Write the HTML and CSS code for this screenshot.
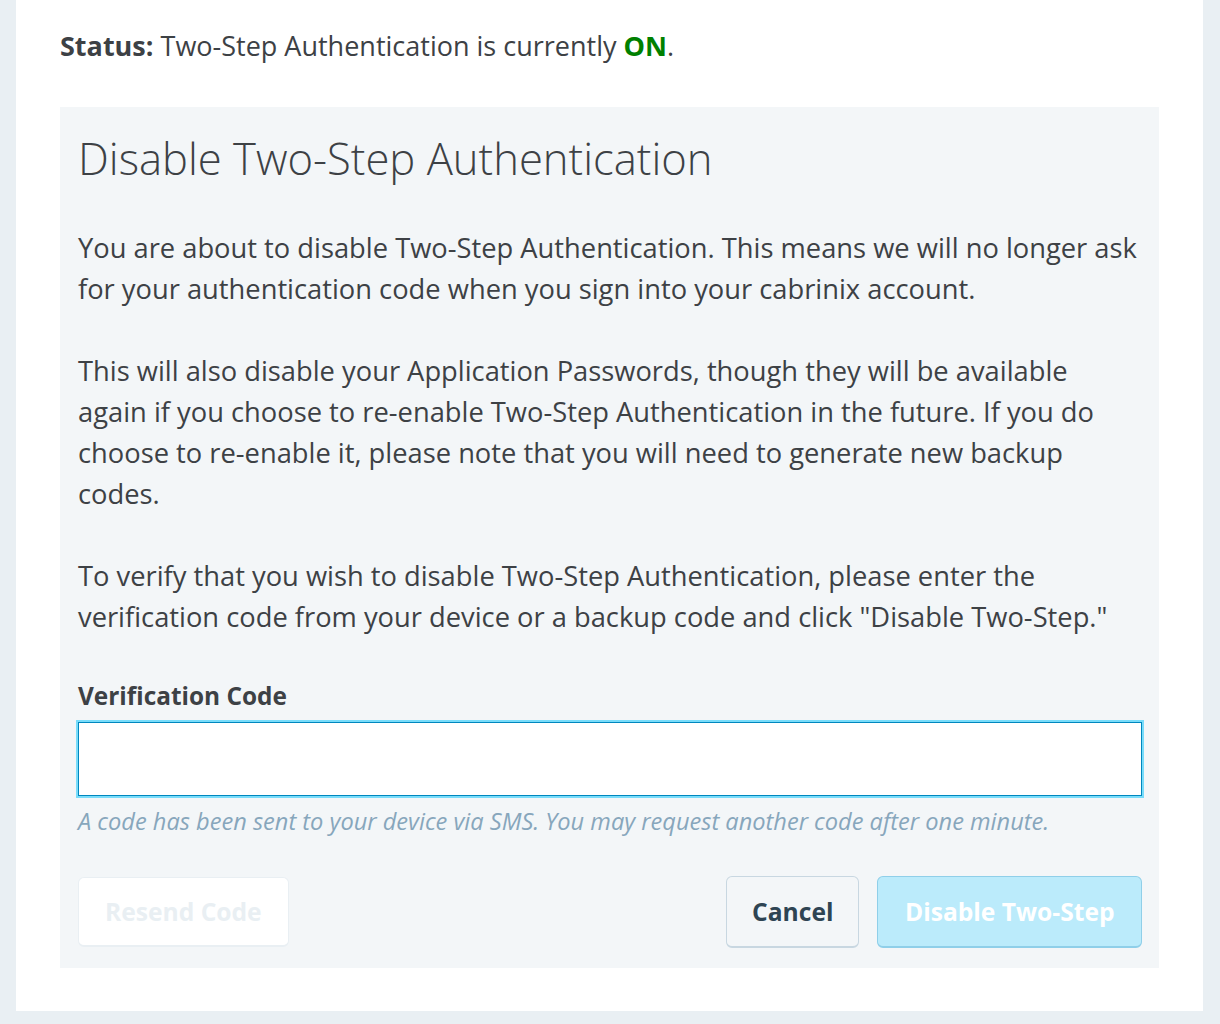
FILE: index.html
```html
<!DOCTYPE html>
<html lang="en">
<head>
<meta charset="utf-8">
<title>Disable Two-Step Authentication</title>
<link rel="stylesheet" href="styles.css">
</head>
<body>
<main class="card">
  <p class="status"><strong>Status:</strong> Two-Step Authentication is currently <span class="on">ON</span>.</p>
  <section class="panel">
    <h1 class="panel-title">Disable Two-Step Authentication</h1>
    <p class="para">You are about to disable Two-Step Authentication. This means we will no longer ask for your authentication code when you sign into your cabrinix account.</p>
    <p class="para">This will also disable your Application Passwords, though they will be available again if you choose to re-enable Two-Step Authentication in the future. If you do choose to re-enable it, please note that you will need to generate new backup codes.</p>
    <p class="para">To verify that you wish to disable Two-Step Authentication, please enter the verification code from your device or a backup code and click "Disable Two-Step."</p>
    <label class="field-label" for="code">Verification Code</label>
    <input class="field-input" id="code" type="text">
    <p class="hint">A code has been sent to your device via SMS. You may request another code after one minute.</p>
    <div class="actions">
      <button class="btn btn-disabled" type="button">Resend Code</button>
      <div class="actions-right">
        <button class="btn btn-cancel" type="button">Cancel</button>
        <button class="btn btn-primary" type="button">Disable Two-Step</button>
      </div>
    </div>
  </section>
</main>
</body>
</html>
```

FILE: styles.css
```css
html, body {
  margin: 0;
  padding: 0;
}
body {
  background: #e9eff3;
  font-family: "Open Sans", "Noto Sans", sans-serif;
  color: #3d4145;
  font-size: 27.3px;
  line-height: 41px;
  padding: 0 17px 0 16px;
}
.card {
  background: #fff;
  padding: 25px 44px 43px 44px;
  box-shadow: 0 1px 0 #d9e2e8;
}
.status {
  margin: 0 0 41px 0;
  font-size: 27px;
}
.status strong {
  font-weight: 700;
}
.on {
  color: #008000;
  font-weight: 700;
}
.panel {
  background: #f3f6f8;
  padding: 24px 17px 20px 18px;
}
.panel-title {
  font-size: 43.6px;
  font-weight: 300;
  line-height: 54px;
  margin: 0 0 42px 0;
}
.para {
  margin: 0 0 41px 0;
}
.field-label {
  display: block;
  font-size: 24.4px;
  font-weight: 700;
  line-height: 36px;
  margin-top: 2px;
  margin-bottom: 8px;
}
.field-input {
  display: block;
  box-sizing: border-box;
  width: 100%;
  height: 74px;
  margin: 0;
  border: 1px solid #0087be;
  box-shadow: 0 0 0 2px #78dcfa;
  background: #fff;
  outline: none;
  font: inherit;
}
.hint {
  margin: 7px 0 37px 0;
  font-size: 23.6px;
  line-height: 36px;
  font-style: italic;
  color: #87a6bc;
}
.actions {
  display: flex;
  justify-content: space-between;
  align-items: flex-start;
}
.actions-right {
  display: flex;
  gap: 18px;
}
.btn {
  font-family: "Open Sans", "Noto Sans", sans-serif;
  font-size: 24.6px;
  font-weight: 700;
  line-height: 36px;
  padding: 17px 25px 16px 25px;
  border-radius: 6px;
  border: 1px solid;
  border-bottom-width: 2px;
  margin: 0;
  cursor: pointer;
}
.btn-disabled {
  margin-top: 1px;
  padding: 16px 26px 15px 26px;
  background: #fff;
  color: #e9eff3;
  border-color: #e9eff3;
}
.btn-cancel {
  background: #f3f6f8;
  color: #2e4453;
  border-color: #c8d7e1;
}
.btn-primary {
  padding-left: 26.5px;
  padding-right: 26.5px;
  background: #bbebfb;
  color: #fff;
  border-color: #8fcfe9;
}
```
